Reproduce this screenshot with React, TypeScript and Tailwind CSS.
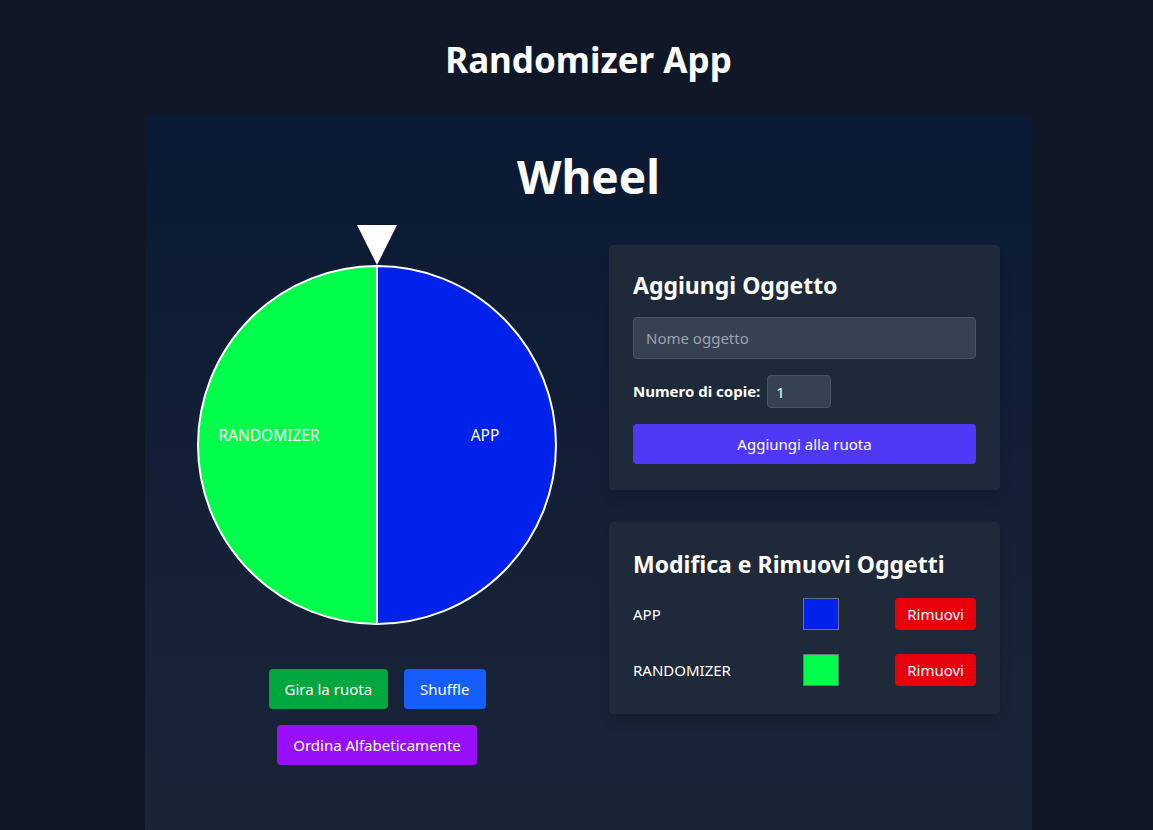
import React, { useState } from 'react'

interface Item {
  id: string
  name: string
  color: string
}

const font = { fontFamily: '"Noto Sans", "Open Sans", sans-serif' }

const Wheel: React.FC<{ items: Item[] }> = ({ items }) => {
  const r = 179
  const c = 180
  const step = (Math.PI * 2) / items.length
  return (
    <svg width="360" height="360" viewBox="0 0 360 360">
      {items.map((item, i) => {
        const a0 = -Math.PI / 2 + i * step
        const a1 = a0 + step
        const x0 = c + r * Math.cos(a0)
        const y0 = c + r * Math.sin(a0)
        const x1 = c + r * Math.cos(a1)
        const y1 = c + r * Math.sin(a1)
        const mid = (a0 + a1) / 2
        const tx = c + 108 * Math.cos(mid)
        const ty = c + 108 * Math.sin(mid) - 8
        const large = step > Math.PI ? 1 : 0
        return (
          <g key={item.id}>
            <path
              d={`M${c},${c} L${x0},${y0} A${r},${r} 0 ${large} 1 ${x1},${y1} Z`}
              fill={item.color}
              stroke="#ffffff"
              strokeWidth="2"
            />
            <text x={tx} y={ty} fill="#ffffff" fontSize="15.5" textAnchor="middle" dominantBaseline="middle" style={font}>
              {item.name}
            </text>
          </g>
        )
      })}
    </svg>
  )
}

export default function App() {
  const [items] = useState<Item[]>([
    { id: '1', name: 'APP', color: '#0022ea' },
    { id: '2', name: 'RANDOMIZER', color: '#00fe4a' },
  ])

  return (
    <div className="min-h-screen bg-gray-900 text-white pl-6" style={font}>
      <h1 className="pt-10 mb-9 text-center text-[35px] leading-10 font-bold">Randomizer App</h1>
      <div className="mx-auto w-[887px] min-h-[720px] px-8 pt-9 bg-gradient-to-b from-[#0a1a34] to-[#1a2437]">
        <h2 className="text-center text-[46px] leading-[48px] font-bold">Wheel</h2>
        <div className="flex gap-8 mt-[25px]">
          <div className="w-[400px] flex flex-col items-center">
            <svg width="40" height="40" viewBox="0 0 40 40">
              <polygon points="0,0 40,0 20,40" fill="#ffffff" />
            </svg>
            <Wheel items={items} />
            <div className="mt-11 flex flex-col items-center gap-4">
              <div className="flex gap-4">
                <button className="h-10 px-4 rounded bg-[#00a63e] text-[15px]">Gira la ruota</button>
                <button className="h-10 px-4 rounded bg-[#155dfc] text-[15px]">Shuffle</button>
              </div>
              <button className="h-10 px-4 rounded bg-[#9810fa] text-[15px]">Ordina Alfabeticamente</button>
            </div>
          </div>
          <div className="w-[391px] mt-5 flex flex-col gap-8">
            <div className="bg-gray-800 rounded px-6 pt-6 pb-[26px] shadow-lg">
              <h3 className="text-[23px] leading-8 font-bold mb-4">Aggiungi Oggetto</h3>
              <input
                type="text"
                placeholder="Nome oggetto"
                className="w-full h-[42px] px-3 rounded bg-[#364153] border border-[#4a5565] text-[15px] placeholder:text-[#99a1af] outline-none"
              />
              <div className="flex items-center gap-[7px] mt-4">
                <label className="text-[15px] font-bold">Numero di copie:</label>
                <input
                  type="number"
                  defaultValue={1}
                  className="w-16 h-[33px] px-2 rounded bg-[#364153] border border-[#4a5565] text-[15px] outline-none"
                />
              </div>
              <button className="w-full h-10 mt-4 rounded bg-[#4f39f6] text-[15px]">Aggiungi alla ruota</button>
            </div>
            <div className="bg-gray-800 rounded px-6 pt-6 pb-7 shadow-lg">
              <h3 className="text-[23px] leading-9 font-bold mb-4">Modifica e Rimuovi Oggetti</h3>
              <div className="flex flex-col gap-6">
                {items.map((item) => (
                  <div key={item.id} className="flex items-center">
                    <span className="w-[170px] text-[15px]">{item.name}</span>
                    <span
                      className="w-9 h-8 border border-gray-500"
                      style={{ backgroundColor: item.color }}
                    />
                    <button className="ml-auto h-8 px-3 rounded bg-[#e7000b] text-[15px]">Rimuovi</button>
                  </div>
                ))}
              </div>
            </div>
          </div>
        </div>
      </div>
    </div>
  )
}
